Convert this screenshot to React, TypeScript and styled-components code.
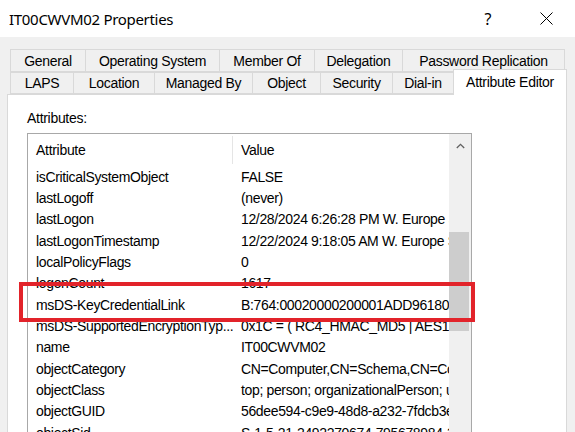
import React from "react";
import styled, { createGlobalStyle } from "styled-components";

const GlobalStyle = createGlobalStyle`
  html, body {
    margin: 0;
    padding: 0;
    background: #f0f0f0;
  }
  * { box-sizing: border-box; }
`;

const UI_FONT = `"Liberation Sans", Arial, sans-serif`;
const TITLE_FONT = `"Noto Sans", "Open Sans", sans-serif`;

const ROW_H = 21.33;

const tabRows = [
  [
    { label: "General", width: 75 },
    { label: "Operating System", width: 134 },
    { label: "Member Of", width: 95 },
    { label: "Delegation", width: 88 },
    { label: "Password Replication", width: 163 },
  ],
  [
    { label: "LAPS", width: 63 },
    { label: "Location", width: 81 },
    { label: "Managed By", width: 98 },
    { label: "Object", width: 68 },
    { label: "Security", width: 72 },
    { label: "Dial-in", width: 61 },
    { label: "Attribute Editor", width: 114, selected: true },
  ],
];

const attributes: [string, string][] = [
  ["isCriticalSystemObject", "FALSE"],
  ["lastLogoff", "(never)"],
  ["lastLogon", "12/28/2024 6:26:28 PM W. Europe Standard Time"],
  ["lastLogonTimestamp", "12/22/2024 9:18:05 AM W. Europe Standard Time"],
  ["localPolicyFlags", "0"],
  ["logonCount", "1617"],
  ["msDS-KeyCredentialLink", "B:764:00020000200001ADD96180A7C3F2E1"],
  ["msDS-SupportedEncryptionTyp...", "0x1C = ( RC4_HMAC_MD5 | AES128_CTS_HMAC_SHA1_96 )"],
  ["name", "IT00CWVM02"],
  ["objectCategory", "CN=Computer,CN=Schema,CN=Configuration"],
  ["objectClass", "top; person; organizationalPerson; user; computer"],
  ["objectGUID", "56dee594-c9e9-48d8-a232-7fdcb3e0a1b2"],
  ["objectSid", "S-1-5-21-2492270674-795678984-3184451190-1105"],
];

const Screen = styled.div`
  position: relative;
  width: 575px;
  height: 432px;
  overflow: hidden;
  background: #f0f0f0;
  display: flex;
  flex-direction: column;
  font-family: ${UI_FONT};
  color: #000;
`;

const TitleBar = styled.div`
  height: 37px;
  flex: none;
  background: #fff;
  display: flex;
  align-items: center;
  padding-left: 9px;
`;

const Title = styled.div`
  font-family: ${TITLE_FONT};
  font-size: 15px;
  letter-spacing: -0.3px;
  flex: 1;
`;

const HelpButton = styled.div`
  width: 58px;
  text-align: center;
  font-family: ${TITLE_FONT};
  font-size: 16px;
`;

const CloseButton = styled.div`
  width: 58px;
  height: 37px;
  display: flex;
  align-items: center;
  justify-content: center;
`;

const Body = styled.div`
  flex: 1;
  display: flex;
  flex-direction: column;
  padding: 12px 8px 0 7px;
`;

const TabStrip = styled.div`
  display: flex;
  flex-direction: column;
  padding-left: 3px;
`;

const TabRow = styled.div<{ $height: number }>`
  display: flex;
  align-items: flex-end;
  height: ${(p) => p.$height}px;
`;

const Tab = styled.div<{ $width: number; $selected?: boolean }>`
  width: ${(p) => p.$width}px;
  height: 100%;
  display: flex;
  align-items: center;
  justify-content: center;
  font-size: 14px;
  letter-spacing: -0.3px;
  white-space: nowrap;
  border: 1px solid #d9d9d9;
  border-right: none;
  background: #f0f0f0;
  &:last-child {
    border-right: 1px solid #d9d9d9;
  }
  ${(p) =>
    p.$selected &&
    `
    position: relative;
    z-index: 2;
    height: 26px;
    margin-bottom: -1px;
    background: #fff;
    border-bottom: none;
    padding-bottom: 2px;
  `}
`;

const Panel = styled.div`
  flex: 1;
  background: #fff;
  border: 1px solid #d9d9d9;
  border-bottom: none;
  padding: 14px 0 0 19px;
`;

const Label = styled.div`
  font-size: 14px;
  letter-spacing: -0.3px;
  height: 24px;
  line-height: 18px;
`;

const ListBox = styled.div`
  width: 445px;
  height: 320px;
  border: 1px solid #a8a8a8;
  border-bottom: none;
  display: flex;
`;

const ListBody = styled.div`
  flex: 1;
  overflow: hidden;
  display: flex;
  flex-direction: column;
`;

const HeaderRow = styled.div`
  height: 32px;
  flex: none;
  display: flex;
  align-items: center;
`;

const HeaderCell = styled.div<{ $width?: number }>`
  ${(p) => (p.$width ? `width: ${p.$width}px; flex: none;` : "flex: 1;")}
  height: 28px;
  display: flex;
  align-items: center;
  padding-left: 8px;
  font-size: 14px;
  letter-spacing: -0.3px;
  border-right: ${(p) => (p.$width ? "1px solid #e5e5e5" : "none")};
`;

const Row = styled.div`
  height: ${ROW_H}px;
  flex: none;
  display: flex;
  align-items: center;
`;

const Cell = styled.div<{ $width?: number }>`
  ${(p) => (p.$width ? `width: ${p.$width}px; flex: none;` : "flex: 1; min-width: 0;")}
  padding-left: 8px;
  font-size: 14px;
  letter-spacing: -0.35px;
  white-space: nowrap;
  overflow: hidden;
`;

const ScrollTrack = styled.div`
  position: relative;
  width: 22px;
  flex: none;
  background: #f0f0f0;
  display: flex;
  justify-content: center;
  padding-top: 9px;
`;

const ScrollThumb = styled.div`
  position: absolute;
  left: 0;
  width: 20px;
  top: 98px;
  height: 99px;
  background: #cdcdcd;
`;

const Highlight = styled.div`
  position: absolute;
  left: 19px;
  top: 282px;
  width: 456px;
  height: 40px;
  border: 4px solid #e2232a;
  pointer-events: none;
`;

export default function App() {
  return (
    <>
      <GlobalStyle />
      <Screen>
        <TitleBar>
          <Title>IT00CWVM02 Properties</Title>
          <HelpButton>?</HelpButton>
          <CloseButton>
            <svg width="13" height="13" viewBox="0 0 13 13">
              <path d="M0.5 0.5 L12.5 12.5 M12.5 0.5 L0.5 12.5" stroke="#000" strokeWidth="1" fill="none" />
            </svg>
          </CloseButton>
        </TitleBar>
        <Body>
          <TabStrip>
            {tabRows.map((row, i) => (
              <TabRow key={i} $height={i === 0 ? 23 : 22}>
                {row.map((t) => (
                  <Tab key={t.label} $width={t.width} $selected={"selected" in t && t.selected}>
                    {t.label}
                  </Tab>
                ))}
              </TabRow>
            ))}
          </TabStrip>
          <Panel>
            <Label>Attributes:</Label>
            <ListBox>
              <ListBody>
                <HeaderRow>
                  <HeaderCell $width={205}>Attribute</HeaderCell>
                  <HeaderCell>Value</HeaderCell>
                </HeaderRow>
                {attributes.map(([name, value]) => (
                  <Row key={name}>
                    <Cell $width={205}>{name}</Cell>
                    <Cell>{value}</Cell>
                  </Row>
                ))}
              </ListBody>
              <ScrollTrack>
                <svg width="9" height="6" viewBox="0 0 9 6">
                  <path d="M0.8 5 L4.5 1.3 L8.2 5" stroke="#606060" strokeWidth="1.3" fill="none" />
                </svg>
                <ScrollThumb />
              </ScrollTrack>
            </ListBox>
          </Panel>
        </Body>
        <Highlight />
      </Screen>
    </>
  );
}
